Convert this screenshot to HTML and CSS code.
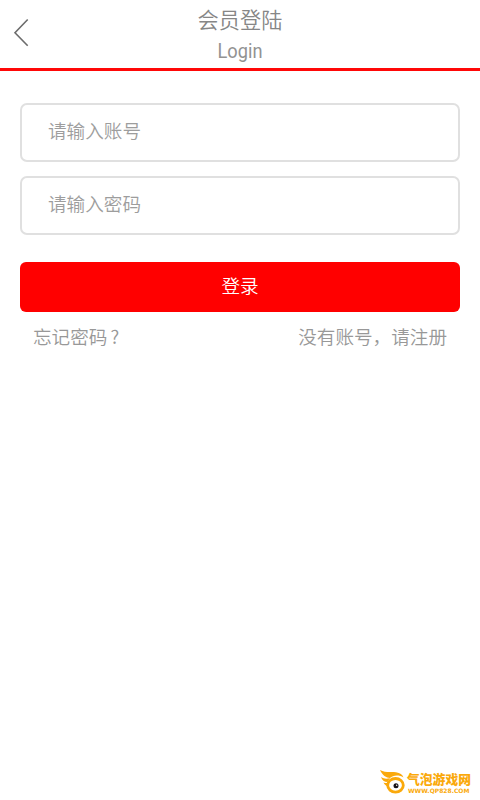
FILE: index.html
```html
<!DOCTYPE html>
<html lang="zh-CN">
<head>
<meta charset="utf-8">
<title>会员登陆</title>
<link rel="stylesheet" href="styles.css">
</head>
<body>
<div class="page">
  <header class="header">
    <a class="back" aria-label="返回">
      <svg width="16" height="30" viewBox="0 0 16 30"><path d="M14.700 2.500 2 15.700 14.700 28.700" fill="none" stroke="#6c6c6c" stroke-width="1.600"/></svg>
    </a>
    <h1 class="title">会员登陆</h1>
    <p class="subtitle">Login</p>
  </header>
  <main class="form">
    <div class="field">请输入账号</div>
    <div class="field">请输入密码</div>
    <div class="submit">登录</div>
    <div class="links"><a>忘记密码<span class="mark">?</span></a><a>没有账号，请注册</a></div>
  </main>
  <footer class="brand">
    <svg class="logo" width="28" height="28" viewBox="0 0 28 28">
      <path d="M1 1C6 4 12 2.500 17 3.200c4 .5 6.500 2.500 7.500 5.300C20 5.500 14 6 11 9 7.500 9 3 6 1 1Z" fill="#faa90b"/>
      <path d="M2 8C5 10 8 10 11 9L8.500 13C5.500 13 2.800 11 2 8Z" fill="#faa90b"/>
      <path d="M4.500 13.500c2 .8 3 .8 5 0l-.5 4c-2-.5-3.500-2-4.500-4Z" fill="#faa90b"/>
      <ellipse cx="16.500" cy="16.300" rx="7.800" ry="6.800" fill="#fff" stroke="#faa90b" stroke-width="2.800"/>
      <circle cx="17" cy="16.700" r="2.500" fill="#17131a"/>
      <circle cx="17.700" cy="16.300" r=".7" fill="#fff"/>
    </svg>
    <div class="brand-text"><div class="brand-name">气泡游戏网</div><div class="brand-url">WWW.QP828.COM</div></div>
  </footer>
</div>
</body>
</html>
```
FILE: styles.css
```css
* { box-sizing: border-box; }
body {
  margin: 0;
  background: #fff;
  font-family: "Noto Sans CJK SC", sans-serif;
  font-weight: 350;
}
.page {
  height: 800px;
  display: flex;
  flex-direction: column;
}
.header {
  position: relative;
  height: 71px;
  border-bottom: 3px solid #ff0808;
  text-align: center;
  color: #868686;
}
.back {
  position: absolute;
  left: 13px;
  top: 17px;
  line-height: 0;
}
.title {
  margin: 0;
  padding-top: 3px;
  font-size: 21.2px;
  line-height: 32px;
  font-weight: 350;
}
.subtitle {
  margin: 0;
  font-family: Roboto, sans-serif;
  font-size: 20px;
  line-height: 32px;
  font-weight: 400;
  color: #929292;
  transform: scaleX(.91);
}
.form {
  flex: 1;
  padding: 32px 20px 0;
}
.field {
  height: 59px;
  margin-bottom: 14px;
  padding-left: 26px;
  border: 2px solid #e0e0e0;
  border-radius: 7px;
  font-size: 18.6px;
  line-height: 50px;
  color: #9d9d9d;
}
.submit {
  height: 50px;
  margin-top: 27px;
  border-radius: 6px;
  background: #f00;
  color: #fff;
  font-size: 18.6px;
  line-height: 46px;
  text-align: center;
}
.links {
  display: flex;
  justify-content: space-between;
  padding: 10px 13px 0;
  font-size: 18.6px;
  line-height: 27px;
  color: #989898;
}
.mark { margin-left: 3px; }
.brand {
  display: flex;
  align-self: flex-end;
  height: 31px;
  margin-right: 10px;
  color: #faa90b;
}
.brand-text { width: 63px; }
.brand-name {
  font-size: 12.8px;
  line-height: 19px;
  font-weight: 900;
  white-space: nowrap;
}
.brand-url {
  padding-left: 1px;
  font-family: "DejaVu Sans", sans-serif;
  font-size: 6px;
  line-height: 6px;
  font-weight: 700;
  white-space: nowrap;
}
```
